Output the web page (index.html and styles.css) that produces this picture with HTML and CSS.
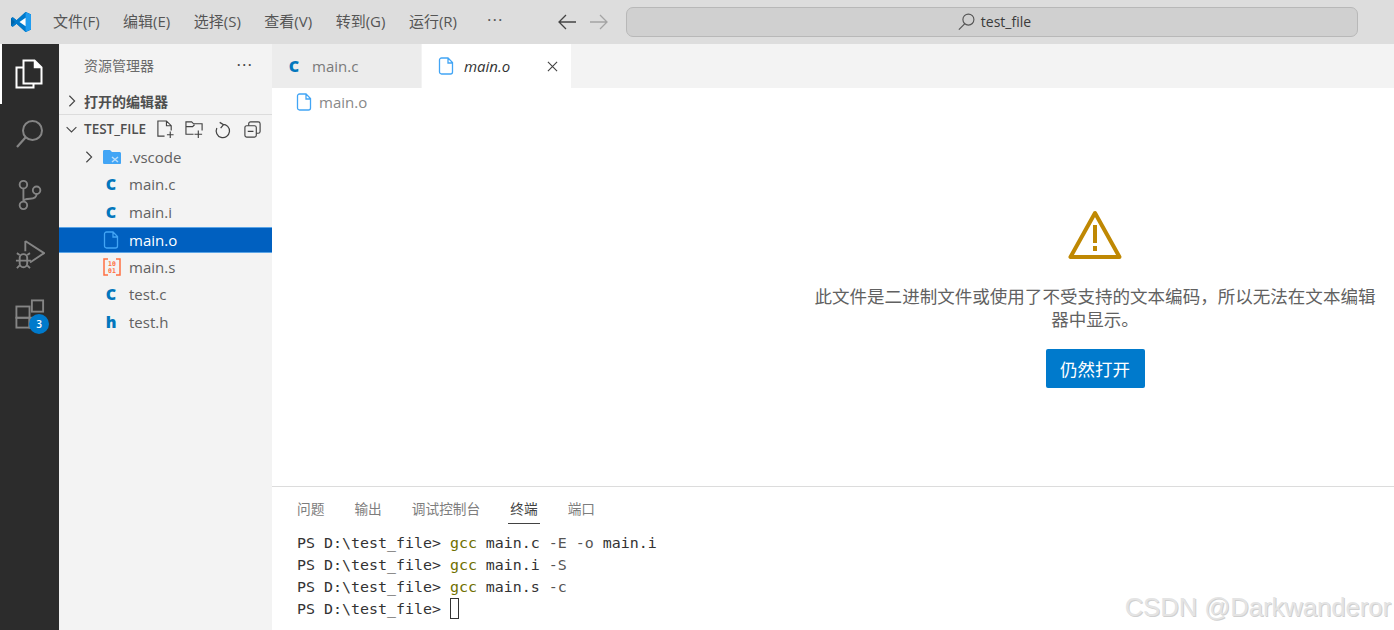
FILE: index.html
```html
<!DOCTYPE html>
<html lang="zh-CN">
<head>
<meta charset="utf-8">
<title>test_file</title>
<link rel="stylesheet" href="styles.css">
</head>
<body>
<div class="app">
  <header class="titlebar">
    <svg class="logo" viewBox="0 0 22 22"><path fill="#0065a9" d="M15.6 1 21 3.5v15L15.6 21l-9-8.2-3.8 2.9L1 14.8V7.2l1.8-.9 3.8 2.9z"/><path fill="#007acc" d="M15.6 1 21 3.5v15L15.6 21 6.6 12.8l-3.8 2.9L1 14.8 5 11 1 7.2l1.8-.9 3.8 2.9z"/><path fill="#1f9cf0" d="M15.6 1 21 3.5v15L15.6 21z"/><path fill="#fff" d="M15.6 6.8 9.5 11l6.1 4.2z"/></svg>
    <nav class="menu">
      <span>文件(F)</span><span>编辑(E)</span><span>选择(S)</span><span>查看(V)</span><span>转到(G)</span><span>运行(R)</span>
      <span class="dots">···</span>
    </nav>
    <div class="arrows">
      <svg viewBox="0 0 20 20"><path d="M19 10H2M9 3l-7 7 7 7" fill="none" stroke="#444" stroke-width="1.300"/></svg>
      <svg viewBox="0 0 20 20"><path d="M1 10h17M11 3l7 7-7 7" fill="none" stroke="#a4a4a4" stroke-width="1.300"/></svg>
    </div>
    <div class="search">
      <svg viewBox="0 0 20 20"><circle cx="12" cy="8" r="5.800" fill="none" stroke="#555" stroke-width="1.200"/><path d="M8 12.500 2 18.500" stroke="#555" stroke-width="1.300"/></svg>
      <span>test_file</span>
    </div>
  </header>
  <div class="body">
    <aside class="activity">
      <div class="act act-on">
        <svg viewBox="0 0 30 30"><path d="M9.500 1.500h11l7 7v16h-18z" fill="none" stroke="#fff" stroke-width="2"/><path d="M20.500 1.500v7h7" fill="#fff" stroke="#fff" stroke-width="1.500"/><path d="M9.500 8.500h-7v20h17v-4" fill="none" stroke="#fff" stroke-width="2"/></svg>
      </div>
      <div class="act">
        <svg viewBox="0 0 30 30"><circle cx="17.500" cy="11.500" r="9.500" fill="none" stroke="#858585" stroke-width="2"/><path d="M10.500 18.500 2 28" stroke="#858585" stroke-width="2.200"/></svg>
      </div>
      <div class="act">
        <svg viewBox="0 0 30 34"><circle cx="8" cy="6" r="4" fill="none" stroke="#858585" stroke-width="2"/><circle cx="8" cy="28" r="4" fill="none" stroke="#858585" stroke-width="2"/><circle cx="22" cy="12" r="4" fill="none" stroke="#858585" stroke-width="2"/><path d="M8 10v14M22 16c0 4-3 5-7 5-4 0-7 1-7 3" fill="none" stroke="#858585" stroke-width="2"/></svg>
      </div>
      <div class="act">
        <svg viewBox="0 0 32 34"><path d="M11 2v11M11 2l20 13-15 10" fill="none" stroke="#858585" stroke-width="2"/><path d="M5 20a4 4 0 0 1 8 0v6a4 4 0 0 1-8 0z" fill="none" stroke="#858585" stroke-width="2"/><path d="M5 17 2 15M13 17l3-2M1 23h4M13 23h4M5 28l-3 3M13 28l3 3M5 23h8" fill="none" stroke="#858585" stroke-width="2"/></svg>
      </div>
      <div class="act act-ext">
        <svg viewBox="0 0 32 32"><rect x="1.500" y="8" width="14" height="12" fill="none" stroke="#858585" stroke-width="2"/><rect x="1.500" y="20" width="14" height="10.500" fill="none" stroke="#858585" stroke-width="2"/><rect x="15.500" y="20" width="14" height="10.500" fill="none" stroke="#858585" stroke-width="2"/><rect x="18" y="1.500" width="12" height="12" fill="none" stroke="#858585" stroke-width="2"/></svg>
        <b class="badge">3</b>
      </div>
    </aside>
    <aside class="sidebar">
      <div class="side-head"><span>资源管理器</span><span class="side-dots">···</span></div>
      <div class="section section-open">
        <svg class="chev" viewBox="0 0 12 16"><path d="M3 2l6 6-6 6" fill="none" stroke="#444" stroke-width="1.300"/></svg>
        <span>打开的编辑器</span>
      </div>
      <div class="section section-root">
        <svg class="chev" viewBox="0 0 16 12"><path d="M2 3l6 6 6-6" fill="none" stroke="#444" stroke-width="1.300"/></svg>
        <span class="root-name">TEST_FILE</span>
        <svg class="tool" viewBox="0 0 20 20"><path d="M9 17H2V1h9l5 5v5M11 1v5h5M15 12v7M11.500 15.500h7" fill="none" stroke="#424242" stroke-width="1.200"/></svg>
        <svg class="tool" viewBox="0 0 20 20"><path d="M9 15H1V2h6l2 2h9v7M1 7h7l2-2M14 11v8M10 15h8" fill="none" stroke="#424242" stroke-width="1.200"/></svg>
        <svg class="tool" viewBox="0 0 20 20"><path d="M6 2.500 10 5 7 8.500M9 4.500a7 7 0 1 1-6 4" fill="none" stroke="#424242" stroke-width="1.300"/></svg>
        <svg class="tool" viewBox="0 0 20 20"><rect x="2" y="6" width="12" height="12" rx="2" fill="none" stroke="#424242" stroke-width="1.200"/><path d="M6 6V4a2 2 0 0 1 2-2h8a2 2 0 0 1 2 2v8a2 2 0 0 1-2 2h-2M5 12h6" fill="none" stroke="#424242" stroke-width="1.200"/></svg>
      </div>
      <ul class="tree">
        <li class="row">
          <svg class="chev chev-sub" viewBox="0 0 12 16"><path d="M3 2l6 6-6 6" fill="none" stroke="#444" stroke-width="1.300"/></svg>
          <svg class="ficon" viewBox="0 0 18 16"><path d="M0 2.500C0 1.500.6 1 1.500 1H7l2 2h7.500c.9 0 1.500.6 1.500 1.500V14c0 .6-.5 1-1 1H1.500C.6 15 0 14.500 0 13.500z" fill="#42a5f5"/><path d="M9 8l6 5M15 8l-6 5" stroke="#bbdefb" stroke-width="1.500"/></svg>
          <span>.vscode</span>
        </li>
        <li class="row"><b class="c-ic">C</b><span>main.c</span></li>
        <li class="row"><b class="c-ic">C</b><span>main.i</span></li>
        <li class="row row-on">
          <svg class="ficon" viewBox="0 0 18 18"><path d="M3.500 1H10l4.500 4.500V15a2 2 0 0 1-2 2h-9a2 2 0 0 1-2-2V3a2 2 0 0 1 2-2zM10 1v5h4.500" fill="none" stroke="#42a5f5" stroke-width="1.300"/></svg>
          <span>main.o</span>
        </li>
        <li class="row">
          <svg class="ficon" viewBox="0 0 18 18"><path d="M5 1H1v16h4M13 1h4v16h-4" fill="none" stroke="#ff7043" stroke-width="1.500"/><text x="9" y="8" class="bin">10</text><text x="9" y="15" class="bin">01</text></svg>
          <span>main.s</span>
        </li>
        <li class="row"><b class="c-ic">C</b><span>test.c</span></li>
        <li class="row"><b class="c-ic">h</b><span>test.h</span></li>
      </ul>
    </aside>
    <main class="main">
      <div class="tabs">
        <div class="tab"><b class="c-ic c-tab">C</b><span>main.c</span></div>
        <div class="tab tab-on">
          <svg class="ficon" viewBox="0 0 18 18"><path d="M3.500 1H10l4.500 4.500V15a2 2 0 0 1-2 2h-9a2 2 0 0 1-2-2V3a2 2 0 0 1 2-2zM10 1v5h4.500" fill="none" stroke="#42a5f5" stroke-width="1.300"/></svg>
          <em>main.o</em>
          <svg class="close" viewBox="0 0 12 12"><path d="M1 1l10 10M11 1 1 11" stroke="#424242" stroke-width="1.200"/></svg>
        </div>
      </div>
      <div class="crumb">
        <svg class="ficon" viewBox="0 0 18 18"><path d="M3.500 1H10l4.500 4.500V15a2 2 0 0 1-2 2h-9a2 2 0 0 1-2-2V3a2 2 0 0 1 2-2zM10 1v5h4.500" fill="none" stroke="#42a5f5" stroke-width="1.300"/></svg>
        <span>main.o</span>
      </div>
      <section class="editor">
        <div class="notice">
          <svg class="warn" viewBox="0 0 54 50"><path d="M27 3 2.500 47h49z" fill="none" stroke="#bf8803" stroke-width="4" stroke-linejoin="round"/><path d="M25 15h4v18h-4zM25 36h4v5h-4z" fill="#bf8803"/></svg>
          <p>此文件是二进制文件或使用了不受支持的文本编码，所以无法在文本编辑器中显示。</p>
          <button class="open">仍然打开</button>
        </div>
      </section>
      <section class="panel">
        <div class="ptabs">
          <span>问题</span><span>输出</span><span>调试控制台</span><span class="ptab-on">终端</span><span>端口</span>
        </div>
        <div class="term">
          <div>PS D:\test_file&gt; <i>gcc</i> main.c <u>-E</u> <u>-o</u> main.i</div>
          <div>PS D:\test_file&gt; <i>gcc</i> main.i <u>-S</u></div>
          <div>PS D:\test_file&gt; <i>gcc</i> main.s <u>-c</u></div>
          <div>PS D:\test_file&gt; <s class="cursor"></s></div>
        </div>
      </section>
    </main>
  </div>
</div>
<div class="mark">CSDN @Darkwanderor</div>
</body>
</html>
```
FILE: styles.css
```css
* { box-sizing: border-box; }
html, body { margin: 0; height: 100%; overflow: hidden; }
body { font-family: "Open Sans", "Noto Sans CJK SC", sans-serif; color: #616161; background: #fff; position: relative; }
ul, p { margin: 0; padding: 0; list-style: none; }
svg { display: block; flex: none; }
.app { display: flex; flex-direction: column; height: 630px; }

.titlebar { height: 44px; background: #dddddd; display: flex; align-items: center; flex: none; }
.logo { width: 22px; height: 22px; margin-left: 10px; }
.menu { display: flex; margin-left: 21px; gap: 23.500px; font-size: 15px; color: #555; width: 502px; padding-bottom: 3px; }
.menu span { white-space: nowrap; }
.menu .dots { font-size: 17px; line-height: 20px; margin-left: 6.500px; letter-spacing: 1px; }
.arrows { display: flex; gap: 12px; margin-left: 2px; }
.arrows svg { width: 20px; height: 20px; }
.search { margin-left: 17px; width: 732px; height: 30px; border: 1px solid #b8b8b8; border-radius: 7px; background: #d0d0d0; display: flex; align-items: center; justify-content: center; gap: 5px; font-size: 14px; color: #3b3b3b; padding: 0 0 1px 4px; }
.search svg { width: 19px; height: 19px; }

.body { flex: 1; display: flex; min-height: 0; }
.activity { width: 59px; background: #2c2c2c; flex: none; }
.act { height: 60.500px; display: flex; align-items: center; justify-content: center; position: relative; }
.act svg { width: 30px; height: 32px; }
.act-on { border-left: 2px solid #fff; padding-right: 3px; height: 60px; }
.act-ext { height: 60px; padding-bottom: 4px; }
.badge { position: absolute; left: 29px; top: 28.500px; width: 20px; height: 20px; border-radius: 50%; background: #007acc; color: #fff; font-size: 10px; line-height: 20px; text-align: center; font-weight: 600; }

.sidebar { width: 213px; background: #f3f3f3; flex: none; }
.side-head { height: 44px; display: flex; align-items: center; justify-content: space-between; padding: 0 19px 3px 25px; font-size: 14px; color: #6a6a6a; }
.side-dots { font-size: 17px; color: #424242; letter-spacing: 1px; line-height: 13px; }
.section { display: flex; align-items: center; font-size: 14px; font-weight: 600; color: #4f4f4f; }
.section-open { height: 27px; padding-left: 7px; gap: 6px; border-bottom: 1px solid #dcdcdc; }
.section-root { height: 28px; padding-left: 6px; gap: 6px; }
.chev { width: 12px; height: 14px; }
.section-root .chev { width: 13px; height: 11px; }
.root-name { font-size: 13.500px; width: 64px; white-space: nowrap; margin-right: 2px; }
.tool { width: 19px; height: 19px; margin-right: 4px; }
.tree { font-size: 15px; }
.row { height: 27.500px; display: flex; align-items: center; padding-left: 46px; position: relative; color: #616161; }
.row .ficon { position: absolute; left: 44px; top: 5px; width: 18px; height: 18px; }
.row span { margin-left: 24px; }
.chev-sub { position: absolute; left: 24px; top: 7px; }
.row-on { background: #0060c0; color: #fff; border: 1px solid #5ba4e6; border-width: 1px 0; height: 26px; margin: 1px 0 .5px; }
.row-on .ficon { top: 3px; }
.row-on span { color: #fff; }
.bin { font-family: "DejaVu Sans Mono", monospace; font-size: 6.500px; font-weight: 700; fill: #ff7043; text-anchor: middle; }
.c-ic { width: 12px; color: #0277bd; font-family: "Open Sans", sans-serif; font-size: 16px; font-weight: 800; text-align: center; line-height: 1; }
.row .c-ic + span { margin-left: 12px; }

.main { flex: 1; min-width: 0; display: flex; flex-direction: column; background: #fff; }
.tabs { height: 44px; background: #f3f3f3; display: flex; flex: none; }
.tab { width: 149px; background: #ececec; display: flex; align-items: center; padding-left: 16px; font-size: 15px; color: #7a7a7a; }
.c-tab { margin-right: 12px; }
.tab-on { background: #fff; margin-left: 1px; color: #333; position: relative; }
.tab-on em { margin-left: 8px; }
.close { width: 11px; height: 11px; margin-left: 37px; }
.tab .ficon { width: 18px; height: 18px; }
.crumb { height: 28px; display: flex; align-items: center; gap: 5px; padding: 0 0 0 24px; font-size: 15px; color: #888; flex: none; margin-bottom: -1px; }
.crumb .ficon { width: 18px; height: 18px; }
.editor { height: 371px; display: flex; justify-content: flex-end; padding-right: 17px; flex: none; }
.notice { width: 564px; display: flex; flex-direction: column; align-items: center; padding-top: 95px; }
.warn { width: 54px; height: 50px; }
.notice p { font-size: 17.550px; line-height: 23px; text-align: center; margin-top: 25px; color: #616161; width: 562px; }
.open { margin-top: 18px; width: 99px; height: 39px; border: 0; border-radius: 2px; background: #007acc; color: #fff; font: 17.500px "Open Sans", "Noto Sans CJK SC", sans-serif; padding: 0; flex: none; }

.panel { flex: 1; min-height: 0; border-top: 1px solid #dcdcdc; padding-left: 25px; }
.ptabs { display: flex; gap: 30px; font-size: 13.700px; height: 37px; align-items: flex-start; padding-top: 11px; color: #7d7d7d; }
.ptab-on { color: #424242; border-bottom: 1px solid #424242; height: 26px; padding: 0 2px; margin: 0 -2px; }
.term { font-family: "DejaVu Sans Mono", monospace; font-size: 14.950px; line-height: 22px; color: #333; margin-top: 8px; }
.term div { white-space: pre; height: 22px; }
.term i { font-style: normal; color: #6f6f00; }
.term u { text-decoration: none; color: #555; }
.cursor { display: inline-block; width: 9px; height: 21px; border: 1px solid #333; vertical-align: -5px; text-decoration: none; }

.mark { position: absolute; right: 3px; bottom: 8px; font: 25.600px "Liberation Sans", sans-serif; color: #e4e4e4; text-shadow: 1px 1px 0 #d0d0d0; white-space: nowrap; }
```
